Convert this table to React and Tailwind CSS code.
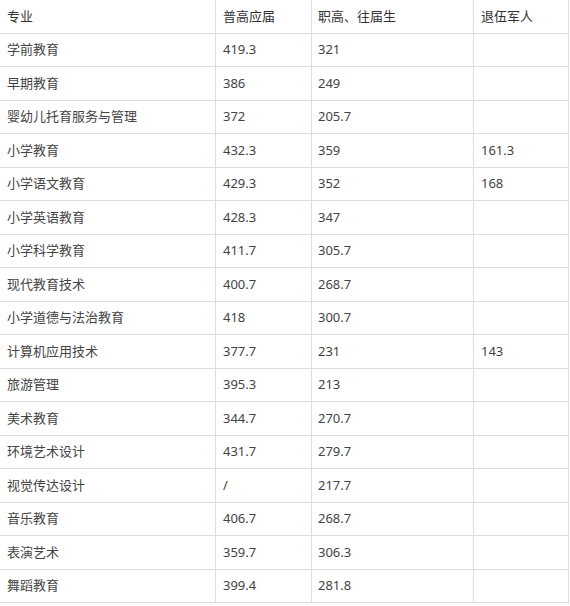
const rows = [
  ["学前教育", "419.3", "321", ""],
  ["早期教育", "386", "249", ""],
  ["婴幼儿托育服务与管理", "372", "205.7", ""],
  ["小学教育", "432.3", "359", "161.3"],
  ["小学语文教育", "429.3", "352", "168"],
  ["小学英语教育", "428.3", "347", ""],
  ["小学科学教育", "411.7", "305.7", ""],
  ["现代教育技术", "400.7", "268.7", ""],
  ["小学道德与法治教育", "418", "300.7", ""],
  ["计算机应用技术", "377.7", "231", "143"],
  ["旅游管理", "395.3", "213", ""],
  ["美术教育", "344.7", "270.7", ""],
  ["环境艺术设计", "431.7", "279.7", ""],
  ["视觉传达设计", "/", "217.7", ""],
  ["音乐教育", "406.7", "268.7", ""],
  ["表演艺术", "359.7", "306.3", ""],
  ["舞蹈教育", "399.4", "281.8", ""],
];

const widths = ["w-[216px]", "w-[96px]", "w-[162px]", "w-[95px]"];
const pads = ["pl-[7px]", "pl-[7px]", "pl-[6px]", "pl-[7px]"];

function Row({ cells, header }) {
  return (
    <div className="flex h-[33.5px] border-b border-[#dedede]">
      {cells.map((c, i) => (
        <div
          key={i}
          className={`${widths[i]} ${pads[i]} shrink-0 flex items-center border-r border-[#dedede] ${
            header ? "text-[#333]" : "text-[#444]"
          }`}
        >
          {c}
        </div>
      ))}
    </div>
  );
}

export default function App() {
  return (
    <div
      className="w-[570px] h-[606px] bg-white text-[13px] leading-none"
      style={{ fontFamily: '"Noto Sans", "Noto Sans CJK SC", sans-serif' }}
    >
      <div className="w-[569px]">
        <Row header cells={["专业", "普高应届", "职高、往届生", "退伍军人"]} />
        {rows.map((r, i) => (
          <Row key={i} cells={r} />
        ))}
      </div>
    </div>
  );
}
